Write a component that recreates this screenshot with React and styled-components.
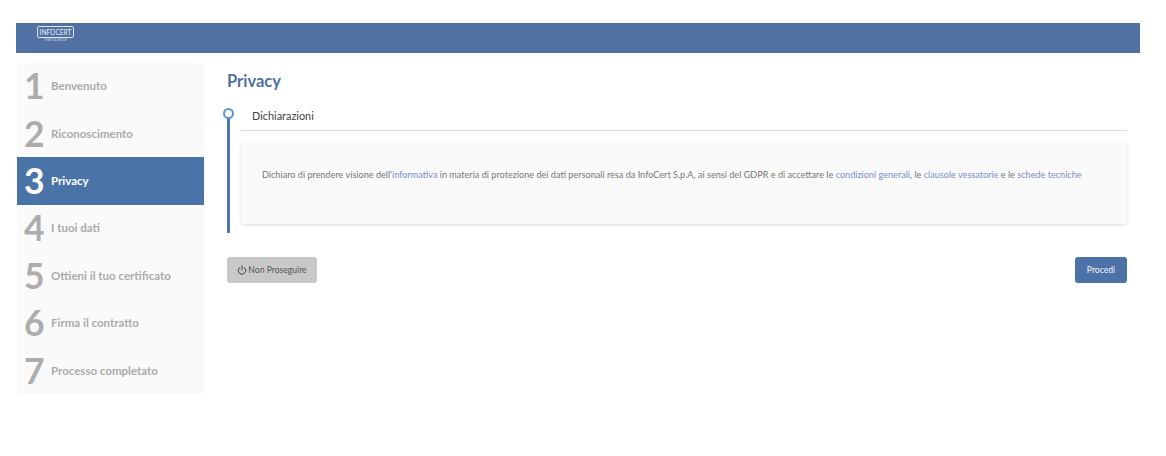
import React from "react";
import styled, { createGlobalStyle } from "styled-components";
import { Power } from "lucide-react";

const GlobalStyle = createGlobalStyle`
  html, body {
    margin: 0;
    padding: 0;
    background: #fff;
    font-family: Lato, "Liberation Sans", sans-serif;
  }
`;

const Page = styled.div`
  padding: 23px 26px 0 16px;
`;

const Header = styled.header`
  height: 30px;
  background: #5170a3;
  padding-left: 21px;
`;

const Logo = styled.div`
  width: 37px;
  display: flex;
  flex-direction: column;
  align-items: center;
  color: #e9edf4;
  padding-top: 3px;
`;

const LogoBox = styled.div`
  width: 100%;
  height: 12px;
  box-sizing: border-box;
  border: 1px solid #dfe5ef;
  border-radius: 2px;
  font-size: 6.6px;
  line-height: 10px;
  text-align: center;
  white-space: nowrap;
`;

const LogoSub = styled.div`
  font-size: 3px;
  line-height: 5px;
  white-space: nowrap;
  opacity: 0.75;
`;

const Body = styled.div`
  display: flex;
  margin-top: 9.5px;
`;

const Sidebar = styled.nav`
  width: 187px;
  height: 331.8px;
  margin-left: 1px;
  background: #fafafa;
  flex-shrink: 0;
`;

const Step = styled.div`
  height: 47.4px;
  display: flex;
  align-items: center;
  background: ${(p) => (p.$active ? "#4a73a8" : "transparent")};
  color: ${(p) => (p.$active ? "#fff" : "#aaa")};
`;

const StepNumber = styled.span`
  width: 34px;
  padding-left: 7px;
  box-sizing: border-box;
  flex-shrink: 0;
  font-size: 35.5px;
  line-height: 47px;
  font-weight: 700;
  margin-top: -1px;
  color: ${(p) => (p.$active ? "#fff" : "#adadad")};
`;

const StepLabel = styled.span`
  font-size: 11.5px;
  font-weight: 700;
  margin-top: -1px;
`;

const Main = styled.main`
  flex: 1;
  margin-left: 23px;
  margin-right: 13px;
  min-width: 0;
`;

const Title = styled.h1`
  margin: 8.5px 0 0;
  font-size: 16.5px;
  line-height: 20px;
  font-weight: 700;
  color: #4f6fa3;
`;

const Timeline = styled.section`
  position: relative;
  margin-top: 17px;
  height: 125px;
  padding-left: 14px;
`;

const Rail = styled.div`
  position: absolute;
  left: 0;
  top: 6px;
  bottom: 0;
  width: 3px;
  background: #4f77ad;
`;

const Dot = styled.div`
  position: absolute;
  left: -4px;
  top: 0;
  width: 11px;
  height: 11px;
  box-sizing: border-box;
  border: 2.5px solid #5b97cf;
  border-radius: 50%;
  background: #fff;
`;

const SectionHead = styled.h2`
  margin: 0;
  padding: 1px 0 0 11px;
  box-sizing: border-box;
  height: 23px;
  border-bottom: 1px solid #dcdcdc;
  font-size: 10.9px;
  line-height: 14px;
  font-weight: 400;
  color: #444;
`;

const Card = styled.div`
  margin-top: 11px;
  height: 82px;
  box-sizing: border-box;
  padding: 27px 0 0 21px;
  background: #fafafa;
  border-radius: 3px;
  box-shadow: 0 1px 3px rgba(0, 0, 0, 0.14);
  font-size: 9.12px;
  line-height: 12px;
  color: #777;
  white-space: nowrap;
`;

const DocLink = styled.a`
  color: #7f8cc8;
  text-decoration: none;
`;

const Actions = styled.div`
  display: flex;
  justify-content: space-between;
  margin-top: 24px;
`;

const Button = styled.button`
  height: 26px;
  border: none;
  border-radius: 3px;
  padding: 0;
  display: inline-flex;
  align-items: center;
  justify-content: center;
  gap: 1px;
  font-family: inherit;
  font-size: 8.6px;
  width: ${(p) => (p.$primary ? "52px" : "90px")};
  background: ${(p) => (p.$primary ? "#4c72a8" : "#c8c8c8")};
  color: ${(p) => (p.$primary ? "#f4f6fa" : "#555")};
`;

const steps = [
  "Benvenuto",
  "Riconoscimento",
  "Privacy",
  "I tuoi dati",
  "Ottieni il tuo certificato",
  "Firma il contratto",
  "Processo completato",
];

export default function App() {
  return (
    <Page>
      <GlobalStyle />
      <Header>
        <Logo>
          <LogoBox>INFOCERT</LogoBox>
          <LogoSub>TINEXTA GROUP</LogoSub>
        </Logo>
      </Header>
      <Body>
        <Sidebar>
          {steps.map((label, i) => (
            <Step key={label} $active={i === 2}>
              <StepNumber $active={i === 2}>{i + 1}</StepNumber>
              <StepLabel>{label}</StepLabel>
            </Step>
          ))}
        </Sidebar>
        <Main>
          <Title>Privacy</Title>
          <Timeline>
            <Rail />
            <Dot />
            <SectionHead>Dichiarazioni</SectionHead>
            <Card>
              Dichiaro di prendere visione dell'<DocLink href="#">informativa</DocLink> in
              materia di protezione dei dati personali resa da InfoCert S.p.A, ai sensi del
              GDPR e di accettare le <DocLink href="#">condizioni generali</DocLink>, le{" "}
              <DocLink href="#">clausole vessatorie</DocLink> e le{" "}
              <DocLink href="#">schede tecniche</DocLink>
            </Card>
          </Timeline>
          <Actions>
            <Button>
              <Power size={10} strokeWidth={2.2} color="#333" />
              Non Proseguire
            </Button>
            <Button $primary>Procedi</Button>
          </Actions>
        </Main>
      </Body>
    </Page>
  );
}
